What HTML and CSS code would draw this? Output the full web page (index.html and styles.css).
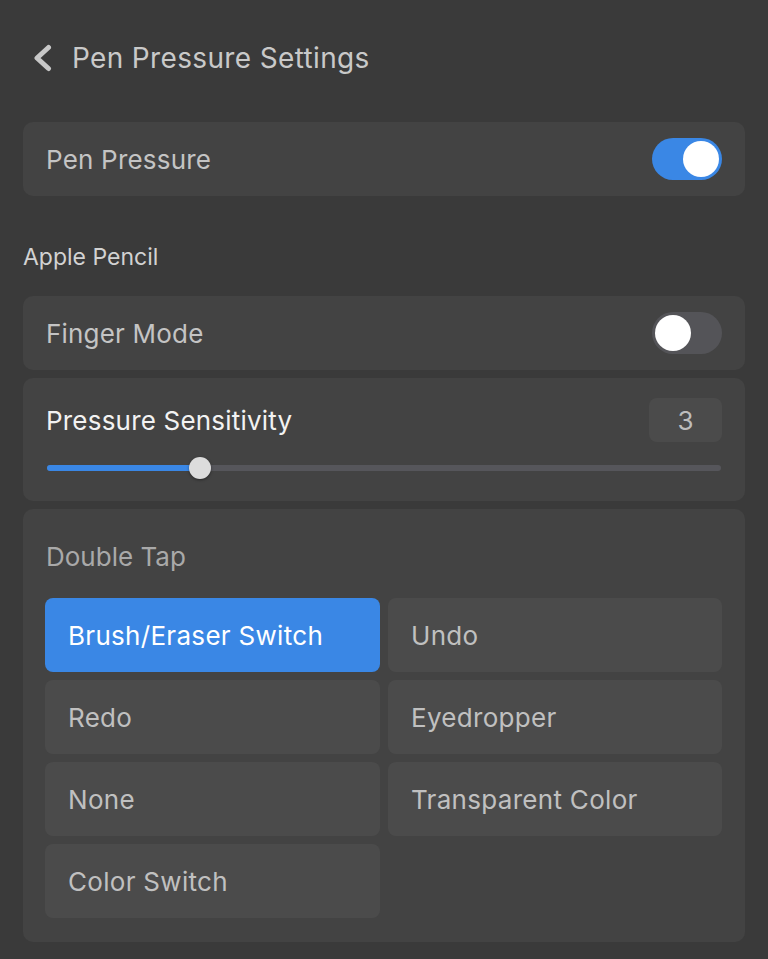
FILE: index.html
```html
<!DOCTYPE html>
<html lang="en">
<head>
  <meta charset="UTF-8">
  <meta name="viewport" content="width=device-width, initial-scale=1.0">
  <title>Pen Pressure Settings</title>
  <link rel="stylesheet" href="styles.css">
</head>
<body>

  <div class="header">
    <svg class="back" width="20" height="28" viewBox="0 0 20 28">
      <path d="M15.5 3.5 L4 14 L15.5 24.5" fill="none" stroke="#c8c8c8" stroke-width="5" stroke-linecap="round" stroke-linejoin="round"/>
    </svg>
    <span class="title">Pen Pressure Settings</span>
  </div>

  <div class="card row">
    <span class="label">Pen Pressure</span>
    <div class="toggle on"><div class="knob"></div></div>
  </div>

  <div class="section">Apple Pencil</div>

  <div class="card row">
    <span class="label">Finger Mode</span>
    <div class="toggle"><div class="knob"></div></div>
  </div>

  <div class="card slider-card">
    <div class="slider-head">
      <span class="label bright">Pressure Sensitivity</span>
      <span class="value">3</span>
    </div>
    <div class="track">
      <div class="fill" style="width: 153px"></div>
      <div class="thumb" style="left: 153px"></div>
    </div>
  </div>

  <div class="card tap-card">
    <div class="tap-title">Double Tap</div>
    <div class="options">
      <div class="opt selected">Brush/Eraser Switch</div>
      <div class="opt">Undo</div>
      <div class="opt">Redo</div>
      <div class="opt">Eyedropper</div>
      <div class="opt">None</div>
      <div class="opt">Transparent Color</div>
      <div class="opt">Color Switch</div>
    </div>
  </div>

</body>
</html>
```

FILE: styles.css
```css
body {
  margin: 0;
  padding: 0 23px;
  background: #3a3a3a;
  font-family: Inter, "Noto Sans", sans-serif;
  color: #c4c4c4;
}

.header {
  height: 122px;
  display: flex;
  align-items: center;
  padding-left: 10px;
  padding-bottom: 6px;
  box-sizing: border-box;
}

.back {
  margin-right: 19px;
}

.title {
  font-size: 28px;
  color: #c9c9c9;
  letter-spacing: 0.35px;
}

.card {
  background: #434343;
  border-radius: 10px;
  margin-bottom: 8px;
}

.row {
  height: 74px;
  display: flex;
  align-items: center;
  justify-content: space-between;
  padding: 0 23px;
}

.label {
  font-size: 26px;
  letter-spacing: 0.2px;
}

.label.bright {
  color: #f2f2f2;
}

.toggle {
  width: 70px;
  height: 42px;
  border-radius: 21px;
  background: #545458;
  position: relative;
}

.toggle.on {
  background: #3a87e5;
}

.knob {
  position: absolute;
  top: 3px;
  left: 3px;
  width: 36px;
  height: 36px;
  border-radius: 50%;
  background: #fff;
}

.toggle.on .knob {
  left: 31px;
}

.section {
  height: 100px;
  display: flex;
  align-items: flex-end;
  font-size: 23px;
  line-height: 28px;
  color: #d2d2d2;
  margin-top: -8px;
  padding-bottom: 25px;
  box-sizing: border-box;
}

.slider-card {
  height: 123px;
  padding: 20px 23px 0 23px;
  box-sizing: border-box;
}

.slider-head {
  display: flex;
  justify-content: space-between;
  align-items: center;
  height: 44px;
}

.value {
  width: 73px;
  height: 44px;
  border-radius: 8px;
  background: #4b4b4b;
  font-size: 26px;
  color: #bdbdbd;
  display: flex;
  align-items: center;
  justify-content: center;
}

.track {
  position: relative;
  height: 6px;
  border-radius: 3px;
  background: #56565b;
  margin: 23px 1px 0 1px;
}

.fill {
  height: 6px;
  border-radius: 3px;
  background: #3a87e5;
}

.thumb {
  position: absolute;
  top: -8px;
  width: 22px;
  height: 22px;
  margin-left: -11px;
  border-radius: 50%;
  background: #dcdcdc;
  box-shadow: 0 1px 3px rgba(0, 0, 0, 0.4);
}

.tap-card {
  padding: 27px 22px 24px 22px;
}

.tap-title {
  font-size: 26px;
  color: #a9a9a9;
  padding-left: 1px;
  height: 62px;
  line-height: 42px;
}

.options {
  display: grid;
  grid-template-columns: 335px 334px;
  gap: 8px;
}

.opt {
  height: 74px;
  border-radius: 8px;
  background: #4b4b4b;
  display: flex;
  align-items: center;
  padding-left: 23px;
  font-size: 26px;
  letter-spacing: 0.3px;
  color: #c0c0c0;
}

.opt.selected {
  background: #3a87e5;
  color: #fff;
}
```
